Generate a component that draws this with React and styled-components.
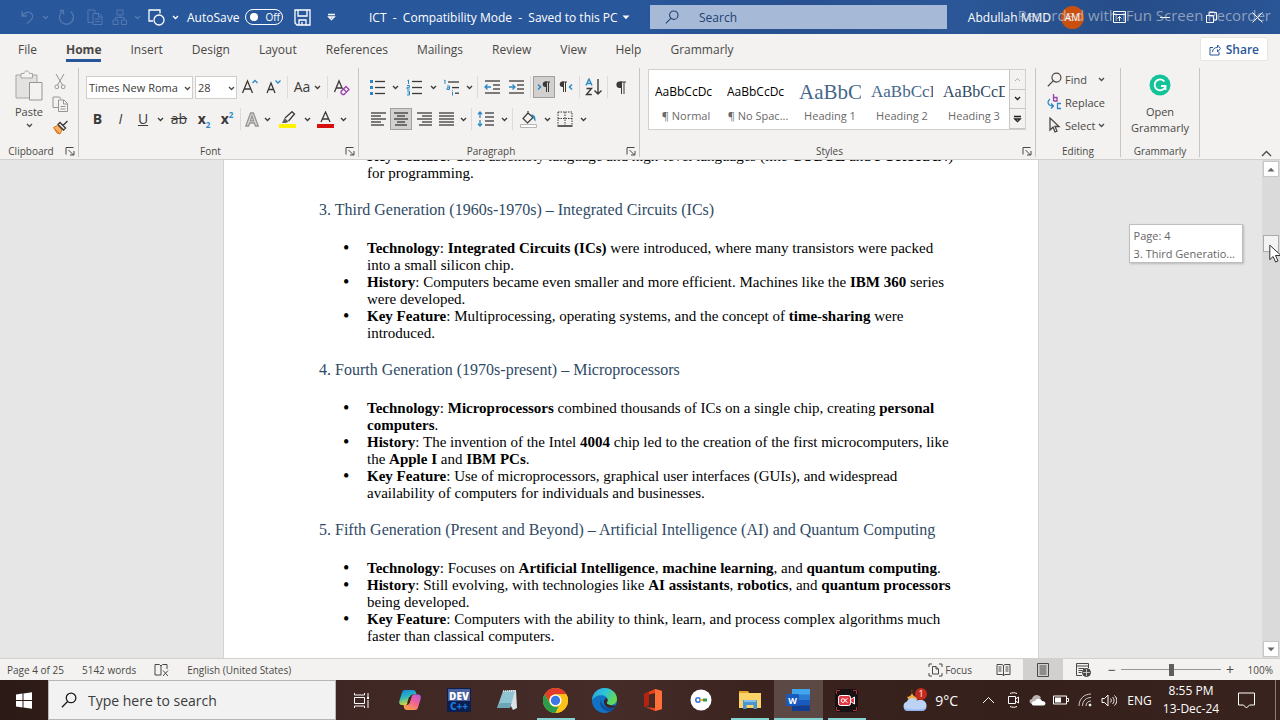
import React, { useState } from "react";
import styled, { createGlobalStyle } from "styled-components";

const Colors = {
  Brand: "#29569a",
  Ribbon: "#f3f2f0",
  Border: "#c8c6c4",
  Text: "#4a4846",
  Ink: "#3b3a39",
  Blue: "#2b88c8",
  Desk: "#e6e6e6",
  Heading: "#2f4a66",
};

const GlobalStyle = createGlobalStyle`
  * { box-sizing: border-box; }
  body { margin: 0; overflow: hidden; font-family: "Open Sans", "Noto Sans", sans-serif; font-size: 12px; color: ${Colors.Text}; }
  button, input, select { font: inherit; color: inherit; }
  button { background: none; border: 0; padding: 0; }
  svg { display: block; flex: none; }
`;

const Shell = styled.div`
  display: flex;
  flex-direction: column;
  height: 100vh;
`;

/* ---------- title bar ---------- */

const TitleBar = styled.header`
  position: relative;
  display: grid;
  grid-template-columns: 369px 281px minmax(180px, 297px) 1fr;
  align-items: center;
  height: 34px;
  color: #fff;
  background: linear-gradient(90deg, #29579b 0 50%, #28508f 62%, #2b5798 75%, #264d88 88%, #2a5596);
`;

const QuickAccess = styled.div`
  display: flex;
  align-items: center;
  padding-left: 17px;
`;

const QuickButton = styled.button`
  display: flex;
  align-items: center;
  justify-content: center;
  width: ${(p) => p.$w || 22}px;
  height: 24px;
  color: ${(p) => (p.$dim ? "#5479b0" : "#fff")};
`;

const AutoSave = styled.label`
  display: flex;
  align-items: center;
  gap: 6px;
  padding: 0 8px 0 6px;
`;

const Toggle = styled.button`
  display: flex;
  align-items: center;
  gap: 7px;
  width: 38px;
  height: 16px;
  padding-left: 4px;
  border: 1px solid #fff;
  border-radius: 8px;
  font-size: 10px;
  line-height: 12px;
`;

const Knob = styled.span`
  width: 8px;
  height: 8px;
  border-radius: 50%;
  background: #fff;
`;

const DocName = styled.button`
  display: flex;
  align-items: center;
  gap: 4px;
  white-space: pre;
`;

const SearchBox = styled.label`
  display: flex;
  align-items: center;
  gap: 20px;
  height: 24px;
  padding-left: 15px;
  background: #a6bad7;
  color: #21406f;
`;

const SearchInput = styled.input`
  flex: 1;
  min-width: 0;
  border: 0;
  padding: 0;
  background: none;
  outline: none;
  &::placeholder { color: #21406f; opacity: 1; }
`;

const WindowSide = styled.div`
  display: flex;
  align-items: center;
  justify-content: flex-end;
`;

const Account = styled.button`
  display: flex;
  align-items: center;
  gap: 10px;
  padding-right: 12px;
  white-space: nowrap;
`;

const Avatar = styled.span`
  width: 23px;
  height: 23px;
  border-radius: 50%;
  background: #ca5010;
  font-size: 10px;
  line-height: 23px;
  text-align: center;
`;

const WindowButton = styled(QuickButton)`
  width: 46px;
`;

const Watermark = styled.div`
  position: absolute;
  top: 4px;
  right: 9px;
  font-size: 15px;
  line-height: 22px;
  color: rgba(214, 214, 220, 0.6);
  white-space: nowrap;
  pointer-events: none;
`;

/* ---------- ribbon ---------- */

const TabRow = styled.nav`
  display: flex;
  align-items: center;
  gap: 29px;
  height: 30px;
  padding: 0 12px 0 18px;
  background: ${Colors.Ribbon};
`;

const Tab = styled.button`
  height: 26px;
  padding-top: 4px;
  line-height: 19px;
  border-bottom: 3px solid ${(p) => (p.$active ? Colors.Brand : "transparent")};
  font-weight: ${(p) => (p.$active ? 700 : 400)};
`;

const Share = styled.button`
  display: flex;
  align-items: center;
  gap: 5px;
  height: 24px;
  margin-left: auto;
  padding: 0 8px;
  border: 1px solid #e8e6e4;
  border-radius: 2px;
  background: #fff;
  color: ${Colors.Brand};
  font-weight: 600;
`;

const RibbonBar = styled.div`
  display: flex;
  height: 96px;
  background: ${Colors.Ribbon};
  border-bottom: 1px solid #d2d0ce;
`;

const GroupBox = styled.section`
  display: flex;
  flex-direction: column;
  width: ${(p) => p.$w}px;
  margin: 4px 0 2px;
  border-right: 1px solid ${Colors.Border};
`;

const GroupBody = styled.div`
  display: flex;
  flex-direction: ${(p) => (p.$row ? "row" : "column")};
  flex: 1;
  gap: ${(p) => p.$gap || 0}px;
  padding: ${(p) => p.$pad || "8px 0 0 7px"};
`;

const GroupFooter = styled.div`
  display: flex;
  align-items: center;
  height: 12px;
  font-size: 10px;
  line-height: 12px;
`;

const GroupName = styled.span`
  flex: 1;
  text-align: center;
`;

const Launcher = styled.button`
  display: flex;
  justify-content: flex-end;
  width: 16px;
  padding-right: 3px;
  color: ${Colors.Text};
`;

const ToolRow = styled.div`
  display: flex;
  align-items: center;
  height: 22px;
`;

const Tool = styled.button`
  display: flex;
  align-items: center;
  justify-content: center;
  gap: 4px;
  width: ${(p) => p.$w || 24}px;
  height: 22px;
  color: ${Colors.Ink};
  background: ${(p) => (p.$on ? "#d2d0ce" : "none")};
  border: ${(p) => (p.$on ? "1px solid #a19f9d" : "0")};
  font-size: 14px;
  font-weight: ${(p) => (p.$bold ? 700 : 400)};
  font-style: ${(p) => (p.$italic ? "italic" : "normal")};
  line-height: 20px;

  sub, sup {
    color: ${Colors.Blue};
    font-size: 8px;
    line-height: 8px;
  }
`;

const Sep = styled.span`
  width: 1px;
  height: 22px;
  margin: 0 2px;
  background: #dddbd9;
`;

const PickerBox = styled.span`
  position: relative;
  width: ${(p) => p.$w}px;
  height: 23px;
  margin-right: ${(p) => p.$after || 0}px;
  background: #fff;
  border: 1px solid #d0cecc;
  overflow: hidden;

  svg { position: absolute; right: 1px; top: 9px; pointer-events: none; }
`;

const PickerSelect = styled.select`
  appearance: none;
  width: 100%;
  height: 21px;
  padding: 0 7px 0 2px;
  border: 0;
  background: none;
  outline: none;
  color: ${Colors.Ink};
  font-size: 11px;
`;

const PasteButton = styled.button`
  display: flex;
  flex-direction: column;
  align-items: center;
  width: 44px;
  font-size: 11px;
  line-height: 16px;
  gap: 3px;
`;

const SmallStack = styled.div`
  display: flex;
  flex-direction: column;
  gap: 1px;
`;

const Gallery = styled.div`
  display: grid;
  grid-template-columns: repeat(5, 72px) 16px;
  height: 61px;
  background: #fff;
  border: 1px solid #d2d0ce;
`;

const StyleCard = styled.button`
  display: grid;
  grid-template-rows: 28px 20px;
  padding: 8px 4px 0 6px;
  overflow: hidden;
  white-space: nowrap;
`;

const Sample = styled.span`
  overflow: hidden;
  text-align: left;
  line-height: 28px;
  font-family: ${(p) => (p.$serif ? '"Liberation Serif", serif' : '"Open Sans", sans-serif')};
  font-size: ${(p) => p.$size}px;
  color: ${(p) => p.$color};
`;

const StyleName = styled.span`
  font-size: 11px;
  line-height: 20px;
  color: #6b6967;
`;

const GalleryScroll = styled.div`
  display: grid;
  grid-template-rows: 1fr 1fr 1fr;
  button {
    display: grid;
    place-items: center;
    background: ${Colors.Ribbon};
    border-left: 1px solid ${Colors.Border};
    border-bottom: 1px solid ${Colors.Border};
    color: #201f1e;
  }
  button:disabled { color: #b0aeac; }
`;

const EditRow = styled.button`
  display: flex;
  align-items: center;
  gap: 3px;
  height: 22px;
  font-size: 11px;

  > svg:last-child { margin-left: ${(p) => p.$caret || 0}px; }
`;

const AddIn = styled.button`
  display: flex;
  flex-direction: column;
  align-items: center;
  font-size: 11px;
  line-height: 16px;
  width: 100%;
  gap: 8px;
`;

const Collapse = styled.button`
  align-self: flex-end;
  margin: 0 8px 2px auto;
`;

/* ---------- document ---------- */

const Workspace = styled.main`
  position: relative;
  display: flex;
  flex: 1;
  min-height: 0;
  background: ${Colors.Desk};
`;

const Canvas = styled.div`
  flex: 1;
  display: flex;
  justify-content: center;
  overflow: hidden;
`;

const Paper = styled.article`
  width: 100%;
  max-width: 816px;
  align-self: flex-start;
  margin-top: -12px;
  padding: 0 83px 60px 95px;
  background: #fff;
  border-left: 1px solid #d4d4d4;
  border-right: 1px solid #d4d4d4;
  color: #000;
  font-family: "Liberation Serif", "Times New Roman", serif;
  font-size: 15px;
  line-height: 17px;

  p { margin: 0 0 0 48px; }
`;

const DocHeading = styled.h3`
  margin: 19px 0 21px;
  font-size: 16px;
  line-height: 18px;
  font-weight: 400;
  color: ${Colors.Heading};
`;

const Bullets = styled.ul`
  margin: 0;
  padding: 0 0 0 48px;
  list-style: none;
`;

const Bullet = styled.li`
  &::before {
    content: "•";
    float: left;
    margin-left: -24px;
    font-size: 18px;
  }
`;

const Scrollbar = styled.div`
  display: flex;
  flex-direction: column;
  align-items: center;
  width: 18px;
  padding: 1px 0;
  background: #dadada;
`;

const ScrollButton = styled.button`
  display: grid;
  place-items: center;
  width: 16px;
  height: 16px;
  background: #fff;
  border: 1px solid #c6c6c6;
  color: #666;
`;

const ScrollTrack = styled.div`
  flex: 1;
  padding-top: 58px;
`;

const Thumb = styled.div`
  width: 16px;
  height: 17px;
  background: #f3f3f3;
  border: 1px solid #ababab;
`;

const PageTip = styled.div`
  position: absolute;
  top: 64px;
  right: 37px;
  padding: 2px 7px 0 4px;
  height: 39px;
  background: #fff;
  border: 1px solid #bebebe;
  box-shadow: 1px 1px 2px rgba(0, 0, 0, 0.2);
  color: #666;
  font-size: 11px;
  line-height: 18px;
`;

const Pointer = styled.svg`
  position: absolute;
  top: 84px;
  right: 0;
`;

/* ---------- status bar ---------- */

const StatusBar = styled.footer`
  display: flex;
  align-items: center;
  height: 22px;
  padding: 0 7px;
  border-top: 1px solid #d2d0ce;
  background: ${Colors.Ribbon};
  font-size: 10px;
`;

const StatusItem = styled.button`
  display: flex;
  align-items: center;
  gap: 2px;
  margin-right: 18px;
`;

const StatusEnd = styled.div`
  display: flex;
  align-items: center;
  margin-left: auto;
`;

const FocusButton = styled(StatusItem)`
  margin-right: 11px;
`;

const ViewButton = styled.button`
  display: grid;
  place-items: center;
  width: 40px;
  height: 21px;
  background: ${(p) => (p.$on ? "#d2d0ce" : "none")};
`;

const ZoomButton = styled.button`
  width: 18px;
  font-size: 14px;
  line-height: 20px;
`;

const ZoomSlider = styled.input`
  appearance: none;
  width: 100px;
  height: 12px;
  margin: 0;
  background: linear-gradient(#979593, #979593) center / 100% 1px no-repeat;
  &::-webkit-slider-thumb {
    appearance: none;
    width: 5px;
    height: 12px;
    background: #605e5c;
  }
`;

const ZoomValue = styled.span`
  width: 34px;
  text-align: right;
`;

/* ---------- taskbar ---------- */

const Taskbar = styled.footer`
  display: flex;
  height: 40px;
  color: #fff;
  background: linear-gradient(90deg, #2c1a17, #402825 30%, #452c29 48%, #3a231f 60%, #35201c 80%, #38231f);
`;

const StartButton = styled.button`
  display: grid;
  place-items: center;
  width: 48px;
`;

const TaskSearch = styled.label`
  display: flex;
  align-items: center;
  gap: 11px;
  flex: 0 1 288px;
  padding-left: 12px;
  border: 1px solid #bab6b5;
  background: #f2f2f2;
  color: #1b1b1b;
  font-size: 14px;
`;

const TaskInput = styled(SearchInput)`
  &::placeholder { color: #3b3b3b; }
`;

const Apps = styled.div`
  display: grid;
  grid-template-columns: 50px repeat(10, 1fr);
  flex: 0 1 535px;
`;

const AppButton = styled.button`
  display: grid;
  place-items: center;
  background: ${(p) => (p.$active ? "#5c4845" : "none")};
  box-shadow: ${(p) => (p.$open ? "inset 0 -2px #84d2d2" : "none")};
  margin: ${(p) => (p.$open && !p.$active ? "0 5px" : "0")};
`;

const Tray = styled.div`
  display: flex;
  align-items: center;
  margin-left: auto;
`;

const TrayButton = styled.button`
  display: grid;
  place-items: center;
  width: ${(p) => p.$w || 24}px;
  height: 40px;
`;

const Weather = styled.button`
  display: flex;
  align-items: center;
  gap: 7px;
  margin-right: 18px;
  font-size: 14px;
`;

const Clock = styled.div`
  width: 66px;
  text-align: center;
  font-size: 12px;
  line-height: 18px;
`;

const DesktopEdge = styled.button`
  width: 5px;
  height: 40px;
  margin-left: 7px;
  border-left: 1px solid #8b7f7d;
`;

/* ---------- icons ---------- */

function Icon({ w = 16, h = w, sw = 1, children, ...rest }) {
  return (
    <svg width={w} height={h} viewBox={`0 0 ${w} ${h}`} fill="none" stroke="currentColor" strokeWidth={sw} aria-hidden="true" {...rest}>
      {children}
    </svg>
  );
}

const Caret = () => <Icon w={7} h={5} sw={1.3}><path d="M1 1l2.500 2.500L6 1" /></Icon>;
const Triangle = ({ up }) => <Icon w={8} h={5}><path d={up ? "M0.5 4.5h7L4 .8z" : "M0.5 .5h7L4 4.2z"} fill="currentColor" stroke="none" /></Icon>;
const More = () => <Icon w={9} h={8} sw={1.3}><path d="M1 1.5h7M1.8 4L4.5 6.6 7.2 4z" /></Icon>;
const Magnifier = ({ size = 14 }) => (
  <svg width={size} height={size} viewBox="0 0 14 14" fill="none" stroke="currentColor" strokeWidth="1.1" aria-hidden="true">
    <circle cx="8.8" cy="5.2" r="4.2" /><path d="M5.8 8.3L.8 13.3" />
  </svg>
);
const LaunchIcon = () => <Icon w={10}><path d="M1 8.5V1.5h7.5M3.500 4l5 5M9 5v4H5" /></Icon>;

// rows of lines, each one given as [x1, x2]
const Lines = ({ rows, y = 2, step = 4 }) => rows.map(([a, b], i) => <path key={i} strokeWidth="1.3" d={`M${a} ${y + i * step}H${b}`} />);

const ListIcon = ({ kind }) => (
  <Icon w={17} h={17}>
    {kind === "bullet" && <path fill={Colors.Blue} stroke="none" d="M1 1h3v3H1zM1 7h3v3H1zM1 13h3v3H1z" />}
    {kind === "number" && <path stroke={Colors.Blue} d="M1.500 1.500l1-.5v4M1 6.500h2.500v1.800H1v1.700h2.700M1 12h2.500v4H1M1.500 14h2" />}
    {kind === "multi" && <path stroke={Colors.Blue} d="M1 1.500l1-.5v4M4 7h2.500v3.500H4V8.800h2.500M9.500 13v3.500M9.500 11.200v1" />}
    {kind === "multi" ? <Lines rows={[[5, 16], [9, 16], [12, 16]]} y={3} step={5.6} /> : <Lines rows={[[6, 16], [6, 16], [6, 16]]} y={2.5} step={6} />}
  </Icon>
);
const IndentIcon = ({ out }) => (
  <Icon w={16}>
    <Lines rows={[[1, 16], [9, 16], [9, 16], [1, 16]]} y={2} />
    <path stroke={Colors.Blue} strokeWidth="1.3" d={out ? "M7 8H1M3.500 5.500L1 8l2.500 2.500" : "M1 8h6M4.500 5.500L7 8l-2.500 2.500"} />
  </Icon>
);
const AlignIcon = ({ rows }) => <Icon w={16}><Lines rows={rows} y={2} step={3} /></Icon>;

function SpacingIcon() {
  return (
    <Icon w={18} h={16}>
      <path stroke={Colors.Blue} strokeWidth="1.3" d="M3 1v6M1 3.200L3 1l2 2.200M3 9v6M1 12.800L3 15l2-2.200" />
      <Lines rows={[[8, 17], [8, 17], [8, 17], [8, 17]]} y={2} />
    </Icon>
  );
}

function AppIcons({ name }) {
  switch (name) {
    case "copilot":
      return (
        <svg width="24" height="24" viewBox="0 0 24 24">
          <defs>
            <linearGradient id="cpA" x1="0" y1="0" x2="0.3" y2="1"><stop stopColor="#1b7fe0" /><stop offset=".5" stopColor="#25b6c0" /><stop offset="1" stopColor="#d8d936" /></linearGradient>
            <linearGradient id="cpB" x1="1" y1="0" x2=".4" y2="1"><stop stopColor="#b45be0" /><stop offset=".5" stopColor="#f0609a" /><stop offset="1" stopColor="#f79a4d" /></linearGradient>
          </defs>
          <path fill="url(#cpA)" d="M7 2h8c2 0 2.600 1.200 3 2.500l.6 2H15c-2 0-2.700 1-3.200 2.600L9.800 15c-.5 1.400-1.500 2-3 2H4c-2.500 0-3.200-1.800-2.600-4L4 4.500C4.500 2.800 5.500 2 7 2z" />
          <path fill="url(#cpB)" d="M17 22H9c-2 0-2.600-1.200-3-2.500L5.500 17H8c2 0 3-1 3.500-2.600L13.500 9c.5-1.600 1.500-2.500 3-2.500H20c2.500 0 3.200 2.300 2.600 4.500L20 19.500c-.5 1.700-1.500 2.500-3 2.500z" />
          <path fill="#3a2422" d="M11 9h2.500l-2 6.500H9z" />
        </svg>
      );
    case "dev":
      return (
        <svg width="24" height="24" viewBox="0 0 24 24" fontFamily="Open Sans" fontWeight="800">
          <rect width="24" height="24" rx="1" fill="#0c1e4e" /><rect x="1" y="1" width="22" height="12" fill="#4a61a0" />
          <text x="12" y="12" fontSize="10" textAnchor="middle" fill="#fff">DEV</text>
          <text x="12" y="22" fontSize="10" textAnchor="middle" fill="#1877d8">C++</text>
        </svg>
      );
    case "notepad":
      return (
        <svg width="24" height="24" viewBox="0 0 24 24">
          <path fill="#d9e2e4" d="M8 3l13-1 1 18-4 2z" /><path fill="#8fc4d2" d="M8 3h12l-5 17H2z" />
          <path fill="#5e98a8" d="M2 20h13l1.500-5H5z" opacity=".7" /><path d="M8 3h12" stroke="#e8eef0" strokeWidth="1.500" strokeDasharray="1 1" />
        </svg>
      );
    case "chrome":
      return (
        <svg width="25" height="25" viewBox="0 0 24 24">
          <circle cx="12" cy="12" r="12" fill="#fbc116" />
          <path fill="#e33b2e" d="M1.600 6A12 12 0 0 1 22.400 6H12a6 6 0 0 0-5.200 9z" />
          <path fill="#2a9d4b" d="M1.600 6l5.200 9A6 6 0 0 0 12 18c1 0 2-.2 3-.8L12 24A12 12 0 0 1 1.600 6z" />
          <path fill="#fbc116" d="M12 6h10.400A12 12 0 0 1 12 24l5.200-9A6 6 0 0 0 12 6z" />
          <circle cx="12" cy="12" r="5.800" fill="#fff" /><circle cx="12" cy="12" r="4.500" fill="#3b78e7" />
        </svg>
      );
    case "edge":
      return (
        <svg width="25" height="25" viewBox="0 0 24 24">
          <defs><linearGradient id="edA" x1="0" y1="0" x2="1" y2=".4"><stop stopColor="#2aa3dd" /><stop offset=".55" stopColor="#2fc3d8" /><stop offset="1" stopColor="#63d957" /></linearGradient></defs>
          <circle cx="12" cy="12" r="12" fill="#1273c4" />
          <path fill="url(#edA)" d="M0 12C.3 5 5.500 0 12 0s12 4.800 12 10.500c0 3.500-2.800 5.800-6 5.800-2.500 0-4-.9-4-1.800 0-.7 1-1.100 1-2.900 0-2.600-2.600-4.600-6-4.600-4 0-7.500 2-9 5z" />
          <path fill="#0f4f9c" d="M8.500 11c-2.500 6 2 11.500 9 11.500 2-.8 4-2.600 5-4.500-2 1-4 1.300-6 1-5-.5-8-4-8-8z" />
          <path fill="#3a2422" d="M14 14.500c0-.7 1-1.100 1-2.900 0-.8-.4-1.600-1-2.300-2 1-3 3.200-2.300 5.700 1.200 3 5 4.800 9 3.800 1.300-.5 2.300-1.200 3-2.300-1.500 1-8.500.5-9.700-2z" />
        </svg>
      );
    case "office":
      return (
        <svg width="20" height="24" viewBox="0 0 20 24">
          <path fill="#e8421f" d="M1 6l11-5 7 2v18l-7 2-10-4 10 1V5L6 6.500V17l-5 2z" /><path fill="#b5230f" d="M1 6l5-2.500V17l-5 2z" /><path fill="#ff6f38" d="M12 1l7 2v18l-7 2z" />
        </svg>
      );
    case "key":
      return (
        <svg width="22" height="22" viewBox="0 0 22 22">
          <circle cx="11" cy="11" r="10.500" fill="#fff" /><circle cx="8" cy="11" r="2.200" fill="none" stroke="#3674d9" strokeWidth="1.600" />
          <path d="M10 11h4" stroke="#f0b51b" strokeWidth="2" /><path d="M13 11h4" stroke="#2f9950" strokeWidth="3" />
        </svg>
      );
    case "files":
      return (
        <svg width="22" height="20" viewBox="0 0 22 20">
          <path fill="#e6a623" d="M0 1h9l2 3H0z" /><path fill="#fbd368" d="M0 3h22v15H0z" /><path fill="#4796d2" d="M4 10h14v9h-3.500v-4h-7v4H4z" /><path fill="#83bfe8" d="M5 10h12v2H5z" />
        </svg>
      );
    case "word":
      return (
        <svg width="24" height="22" viewBox="0 0 24 22" fontFamily="Open Sans" fontWeight="700">
          <path fill="#41a5ee" d="M6 0h18v6H6z" /><path fill="#2b7cd3" d="M6 5.500h18V11H6z" /><path fill="#185abd" d="M6 11h18v5.500H6z" /><path fill="#103f91" d="M6 16.500h18V22H6z" />
          <rect y="5" width="13" height="12" rx="1" fill="#185abd" /><text x="6.500" y="14.500" fontSize="9" textAnchor="middle" fill="#fff">W</text>
        </svg>
      );
    default:
      return (
        <svg width="23" height="23" viewBox="0 0 23 23">
          <rect width="23" height="23" rx="4" fill="#171114" />
          <path d="M1.500 5V1.500H5M18 1.500h3.500V5M21.500 18v3.500H18M5 21.500H1.500V18" stroke="#b92c35" fill="none" />
          <rect x="3.500" y="6.500" width="12" height="10" rx="2" fill="#e23a45" stroke="#fff" /><path d="M15.500 10.500l4-2.500v7l-4-2.500z" fill="#e23a45" stroke="#fff" />
          <circle cx="8" cy="11.500" r="1.800" fill="none" stroke="#fff" /><path d="M9.500 11.500l3-2M10 11.500l2.500 2" stroke="#fff" />
        </svg>
      );
  }
}

/* ---------- pieces ---------- */

const tabs = ["File", "Home", "Insert", "Design", "Layout", "References", "Mailings", "Review", "View", "Help", "Grammarly"];

const styleCards = [
  { sample: "AaBbCcDc", name: "¶ Normal", size: 12, color: "#000" },
  { sample: "AaBbCcDc", name: "¶ No Spac...", size: 12, color: "#000" },
  { sample: "AaBbC", name: "Heading 1", size: 21, color: "#44678c", serif: true },
  { sample: "AaBbCcI", name: "Heading 2", size: 17, color: "#44678c", serif: true },
  { sample: "AaBbCcD", name: "Heading 3", size: 16, color: "#2f4a66", serif: true },
];

const apps = [
  { id: "copilot", label: "Copilot" },
  { id: "dev", label: "Dev-C++" },
  { id: "notepad", label: "Notepad" },
  { id: "chrome", label: "Chrome", open: true },
  { id: "edge", label: "Edge" },
  { id: "office", label: "Office" },
  { id: "key", label: "Passwords" },
  { id: "files", label: "File Explorer", open: true },
  { id: "word", label: "Word", open: true, active: true },
  { id: "recorder", label: "Recorder", open: true },
];

function Group({ name, w, launcher, children }) {
  return (
    <GroupBox $w={w}>
      {children}
      <GroupFooter>
        <GroupName>{name}</GroupName>
        {launcher && <Launcher aria-label={`${name} settings`}><LaunchIcon /></Launcher>}
      </GroupFooter>
    </GroupBox>
  );
}

const CaretTool = ({ of }) => <Tool $w={12} aria-label={`${of} options`}><Caret /></Tool>;

function Header() {
  const [saving, setSaving] = useState(false);
  return (
    <TitleBar>
      <QuickAccess>
        <QuickButton $dim aria-label="Undo"><Icon w={16}><path strokeWidth="1.300" d="M2 2v5h5M2 7c3-4 7-5 9.500-2.500S13 10 7 14.500" /></Icon></QuickButton>
        <QuickButton $w={12} $dim aria-label="Undo history"><Caret /></QuickButton>
        <QuickButton $w={30} $dim aria-label="Redo"><Icon w={16}><path strokeWidth="1.300" d="M12.500 2.500A7 7 0 1 1 4.500 2.500M1.500 1.500h4v4" /></Icon></QuickButton>
        <QuickButton $w={28} $dim aria-label="Copy"><Icon w={16}><path d="M6 13.500H1V1h7v3M6 4.500h6l3 3v8H6zM11.500 4.500V8H15M8 10h5M8 12.500h5" /></Icon></QuickButton>
        <QuickButton $w={22} $dim aria-label="Arrange"><Icon w={16}><path d="M5 1h6v5H5zM1 11h5v4.500H1zM9.500 11h5v4.500h-5zM8 6v2.500M3.500 11V8.500H12V11" /></Icon></QuickButton>
        <QuickButton $w={12} $dim aria-label="Arrange options"><Caret /></QuickButton>
        <QuickButton $w={26} aria-label="Shapes"><Icon w={17}><path strokeWidth="1.300" d="M5 12H1V1h11v3.500" /><circle cx="11" cy="11" r="5" strokeWidth="1.300" /></Icon></QuickButton>
        <QuickButton $w={12} aria-label="Shape options"><Caret /></QuickButton>
        <AutoSave>
          AutoSave
          <Toggle role="switch" aria-checked={saving} onClick={() => setSaving(!saving)}><Knob />{saving ? "On" : "Off"}</Toggle>
        </AutoSave>
        <QuickButton $w={22} aria-label="Save"><Icon w={17}><path strokeWidth="1.300" d="M1 1h15v15H3l-2-2zM4 1v6h9V1M5 16v-5h7v5M8 13v3" /></Icon></QuickButton>
        <QuickButton $w={36} aria-label="Customize toolbar"><More /></QuickButton>
      </QuickAccess>
      <DocName>{"ICT  -  Compatibility Mode  -  Saved to this PC"}<Triangle /></DocName>
      <SearchBox>
        <Magnifier />
        <SearchInput placeholder="Search" aria-label="Search" />
      </SearchBox>
      <WindowSide>
        <Account>Abdullah MMD<Avatar>AM</Avatar></Account>
        <WindowButton aria-label="Ribbon display"><Icon w={13} h={12}><path d="M.5 .5h12v11H.5zM.5 3.500h12M6.500 10V5.500M4.500 7.500l2-2 2 2" /></Icon></WindowButton>
        <WindowButton aria-label="Minimize"><Icon w={10}><path d="M0 5.500h10" /></Icon></WindowButton>
        <WindowButton aria-label="Restore"><Icon w={11}><path d="M.5 3.500h7v7h-7zM3 3.500V.5h7.500V8h-3" /></Icon></WindowButton>
        <WindowButton aria-label="Close"><Icon w={11}><path d="M.5 .5l10 10M10.500 .5l-10 10" /></Icon></WindowButton>
      </WindowSide>
      <Watermark>Recorded with iFun Screen Recorder</Watermark>
    </TitleBar>
  );
}

function FontGroup() {
  return (
    <Group name="Font" w={280} launcher>
      <GroupBody $gap={10}>
        <ToolRow>
          <PickerBox $w={107} $after={2}>
            <PickerSelect aria-label="Font"><option>Times New Roma</option></PickerSelect><Caret />
          </PickerBox>
          <PickerBox $w={42}>
            <PickerSelect aria-label="Font size"><option>28</option></PickerSelect><Caret />
          </PickerBox>
          <Tool aria-label="Grow font"><Icon w={17} h={16}><path strokeWidth="1.300" d="M1.500 14L6.500 2l5 12M3.300 10h6.400" /><path stroke={Colors.Blue} strokeWidth="1.300" d="M11.500 4L14 1.500 16.500 4" /></Icon></Tool>
          <Tool aria-label="Shrink font"><Icon w={16} h={16}><path strokeWidth="1.300" d="M2 14L6 4l4 10M3.500 10.500h5" /><path stroke={Colors.Blue} strokeWidth="1.300" d="M10.500 1.500L13 4l2.500-2.500" /></Icon></Tool>
          <Sep />
          <Tool $w={35} aria-label="Change case">Aa<Caret /></Tool>
          <Sep />
          <Tool $w={22} aria-label="Clear formatting"><Icon w={17} h={17}><path strokeWidth="1.300" d="M1.500 13L6 2l3.500 8M3.300 9h5" /><path stroke="#9a3fb0" strokeWidth="1.300" d="M8 12.500l5-5 3 3-5 5H9.500L8 14zM10.500 10l3 3" /></Icon></Tool>
        </ToolRow>
        <ToolRow>
          <Tool $w={23} $bold>B</Tool>
          <Tool $w={23} $italic>I</Tool>
          <Tool $w={22}><u>U</u></Tool>
          <CaretTool of="Underline" />
          <Tool $w={26}><s>ab</s></Tool>
          <Tool $w={24} $bold><span>x<sub>2</sub></span></Tool>
          <Tool $w={22} $bold><span>x<sup>2</sup></span></Tool>
          <Sep />
          <Tool $w={18} aria-label="Text effects"><Icon w={14} h={15}><path stroke="#979593" strokeWidth="1.300" fill="#dddbd9" d="M.8 14L5.600 1h2.800l4.800 13h-2.800l-1-3H4.600l-1 3zM5.400 8.800h3.200L7 4z" /></Icon></Tool>
          <CaretTool of="Text effects" />
          <Tool $w={28} aria-label="Highlight"><Icon w={17} h={17}><path fill="#fff200" stroke="none" d="M0 13h17v4H0z" /><path fill="#605e5c" stroke="none" d="M3 12l2.500-5 4 3.500L7 12z" /><path strokeWidth="1.300" d="M6 7l7-6.300L15.500 3 9.500 10" /></Icon></Tool>
          <CaretTool of="Highlight" />
          <Tool $w={24} aria-label="Font colour"><Icon w={17} h={17}><path fill="#d80f0f" stroke="none" d="M0 13h17v4H0z" /><path strokeWidth="1.300" d="M4 11l4.500-10L13 11M5.500 8h6" /></Icon></Tool>
          <CaretTool of="Font colour" />
        </ToolRow>
      </GroupBody>
    </Group>
  );
}

function ParagraphGroup() {
  return (
    <Group name="Paragraph" w={281} launcher>
      <GroupBody $gap={10} $pad="8px 0 0 6px">
        <ToolRow>
          <Tool aria-label="Bullets"><ListIcon kind="bullet" /></Tool>
          <CaretTool of="Bullets" />
          <Tool $w={26} aria-label="Numbering"><ListIcon kind="number" /></Tool>
          <CaretTool of="Numbering" />
          <Tool aria-label="Multilevel list"><ListIcon kind="multi" /></Tool>
          <CaretTool of="Multilevel" />
          <Sep />
          <Tool aria-label="Decrease indent"><IndentIcon out /></Tool>
          <Tool aria-label="Increase indent"><IndentIcon /></Tool>
          <Sep />
          <Tool $w={22} $on aria-label="Left to right"><Icon w={14} h={14}><path stroke={Colors.Blue} strokeWidth="1.500" d="M1 4.500L3.500 7 1 9.500" /><path d="M9.500 2v10M11.500 2v10M8 2h5" /><path fill="currentColor" stroke="none" d="M10 1.500H8.500a2.700 2.700 0 0 0 0 5.500H10z" /></Icon></Tool>
          <Tool $w={22} aria-label="Right to left"><Icon w={14} h={14}><path stroke={Colors.Blue} strokeWidth="1.500" d="M13 4.500L10.500 7l2.500 2.500" /><path d="M4.500 2v10M6.500 2v10M3 2h5" /><path fill="currentColor" stroke="none" d="M5 1.500H3.500a2.700 2.700 0 0 0 0 5.500H5z" /></Icon></Tool>
          <Sep />
          <Tool $w={23} aria-label="Sort"><Icon w={17} h={18}><path stroke={Colors.Blue} strokeWidth="1.400" d="M1 7.500L4 1l3 6.500M2 5.500h4" /><path strokeWidth="1.400" d="M1.500 10.500h5l-5 6h5.300M13 1v15M9.500 12.500L13 16l3.500-3.500" /></Icon></Tool>
          <Sep />
          <Tool $w={22} aria-label="Show marks"><Icon w={10} h={13}><path d="M5.500 1v12M8 1v12M4 1h6" /><path fill="currentColor" stroke="none" d="M6 .5H3.700a3.300 3.300 0 0 0 0 6.600H6z" /></Icon></Tool>
        </ToolRow>
        <ToolRow>
          <Tool $w={25} aria-label="Align left"><AlignIcon rows={[[1, 16], [1, 11], [1, 16], [1, 11], [1, 14]]} /></Tool>
          <Tool $w={22} $on aria-label="Center"><AlignIcon rows={[[1, 15], [4, 12], [1, 15], [4, 12], [2, 14]]} /></Tool>
          <Tool $w={23} aria-label="Align right"><AlignIcon rows={[[1, 16], [6, 16], [1, 16], [6, 16], [3, 16]]} /></Tool>
          <Tool $w={22} aria-label="Justify"><AlignIcon rows={[[1, 16], [1, 16], [1, 16], [1, 16], [1, 16]]} /></Tool>
          <CaretTool of="Justify" />
          <Sep />
          <Tool aria-label="Line spacing"><SpacingIcon /></Tool>
          <CaretTool of="Line spacing" />
          <Sep />
          <Tool $w={26} aria-label="Shading"><Icon w={17} h={17}><path fill="#fff" stroke="#b8b6b4" d="M.5 13.500h16v3H.5z" /><path strokeWidth="1.200" d="M8 2L3 7.500 7.500 12l5.500-5.500L8 2V0" /><path fill={Colors.Blue} stroke="none" d="M11 3.500c3-.5 5 2 4.500 7-1-.5-1.500-2.500-2.500-4z" /></Icon></Tool>
          <CaretTool of="Shading" />
          <Tool aria-label="Borders"><Icon w={16}><path strokeDasharray="1.500 1" d="M1 1h14v13M1 1v13M8 1v13M1 7.500h14" /><path strokeWidth="1.600" d="M.5 15h15" /></Icon></Tool>
          <CaretTool of="Borders" />
        </ToolRow>
      </GroupBody>
    </Group>
  );
}

function Ribbon() {
  return (
    <RibbonBar>
      <Group name="Clipboard" w={79} launcher>
        <GroupBody $row $pad="2px 0 0 7px">
          <PasteButton>
            <Icon w={28} h={31}><path stroke="#a8a6a4" fill="#e4e2e0" d="M1 5h21v23H1z" /><path stroke="#a8a6a4" fill="#f3f2f0" d="M6 3.500h3c.5-3.500 5-3.500 5.500 0H17.500V8H6z" /><path stroke="#979593" fill="#f3f2f0" d="M14.500 12.500h12.500V30H14.500z" /></Icon>
            Paste
            <Caret />
          </PasteButton>
          <SmallStack>
            <Tool $w={18} aria-label="Cut"><Icon w={12} h={17}><path stroke="#979593" d="M2 1l6.500 11M10 1L3.500 12" /><circle cx="2.800" cy="13.800" r="1.900" stroke="#979593" /><circle cx="9.200" cy="13.800" r="1.900" stroke="#979593" /></Icon></Tool>
            <Tool $w={18} aria-label="Copy"><Icon w={16}><path stroke="#979593" d="M6 11.500H1V1h6.500l1.500 2M6.500 4h5.500l3.500 3.500V15.500h-9zM11.500 4v4h4M8.500 10.500h5M8.500 13h5" /></Icon></Tool>
            <Tool $w={18} aria-label="Format painter"><Icon w={17} h={16}><path fill="#f6b26a" stroke="#e0731a" d="M1.500 8.500l4-2 4.500 4.500-2 4-3-1z" /><path stroke="#e0731a" d="M3 10l4 4" /><path d="M6 5.500l5.500 5.500L13.500 9 8 3.500zM11 6.500L15.500 2" strokeWidth="1.400" /></Icon></Tool>
          </SmallStack>
        </GroupBody>
      </Group>
      <FontGroup />
      <ParagraphGroup />
      <Group name="Styles" w={396} launcher>
        <GroupBody $pad="1px 9px 0 8px">
          <Gallery>
            {styleCards.map((s) => (
              <StyleCard key={s.name}>
                <Sample $size={s.size} $color={s.color} $serif={s.serif}>{s.sample}</Sample>
                <StyleName>{s.name}</StyleName>
              </StyleCard>
            ))}
            <GalleryScroll>
              <button disabled aria-label="Previous styles"><Icon w={7} h={5}><path d="M1 4l2.500-2.500L6 4" /></Icon></button>
              <button aria-label="Next styles"><Caret /></button>
              <button aria-label="All styles"><More /></button>
            </GalleryScroll>
          </Gallery>
        </GroupBody>
      </Group>
      <Group name="Editing" w={85}>
        <GroupBody $gap={1} $pad="0 0 0 11px">
          <EditRow $caret={8}><Magnifier size={15} />Find<Caret /></EditRow>
          <EditRow><Icon w={15} h={16}><path stroke="#9a3fb0" strokeWidth="1.300" d="M6.500 0v7M6.500 3.500h3.500V7H6.500" /><path stroke={Colors.Blue} strokeWidth="1.300" d="M14 9.500h-3.500v5H14M3 5C-.5 8 1 12 6 12M4 9.500L6.500 12 4 14.500" /></Icon>Replace</EditRow>
          <EditRow><Icon w={15} h={16}><path strokeWidth="1.300" d="M3 1v12l3-2.800L8 15l2-.9-2-4.600h4z" /></Icon>Select<Caret /></EditRow>
        </GroupBody>
      </Group>
      <Group name="Grammarly" w={79}>
        <GroupBody $pad="6px 0 0">
          <AddIn>
            <svg width="22" height="22" viewBox="0 0 22 22" aria-hidden="true"><circle cx="11" cy="11" r="10.500" fill="#15c39a" /><path fill="none" stroke="#fff" strokeWidth="1.800" d="M15.500 7.500A5.500 5.500 0 1 0 16.500 12M12 12h4.500v4" /></svg>
            <span>Open<br />Grammarly</span>
          </AddIn>
        </GroupBody>
      </Group>
      <Collapse aria-label="Collapse ribbon"><Icon w={11} h={7} sw={1.3}><path d="M1 6l4.500-4.500L10 6" /></Icon></Collapse>
    </RibbonBar>
  );
}

function DocumentView() {
  return (
    <Workspace>
      <Canvas>
        <Paper>
          <p><b>Key Feature</b>: Used assembly language and high-level languages (like <b>COBOL</b> and <b>FORTRAN</b>) for programming.</p>
          <DocHeading>3. Third Generation (1960s-1970s) – Integrated Circuits (ICs)</DocHeading>
          <Bullets>
            <Bullet><b>Technology</b>: <b>Integrated Circuits (ICs)</b> were introduced, where many transistors were packed into a small silicon chip.</Bullet>
            <Bullet><b>History</b>: Computers became even smaller and more efficient. Machines like the <b>IBM 360</b> series were developed.</Bullet>
            <Bullet><b>Key Feature</b>: Multiprocessing, operating systems, and the concept of <b>time-sharing</b> were introduced.</Bullet>
          </Bullets>
          <DocHeading>4. Fourth Generation (1970s-present) – Microprocessors</DocHeading>
          <Bullets>
            <Bullet><b>Technology</b>: <b>Microprocessors</b> combined thousands of ICs on a single chip, creating <b>personal computers</b>.</Bullet>
            <Bullet><b>History</b>: The invention of the Intel <b>4004</b> chip led to the creation of the first microcomputers, like the <b>Apple I</b> and <b>IBM PCs</b>.</Bullet>
            <Bullet><b>Key Feature</b>: Use of microprocessors, graphical user interfaces (GUIs), and widespread availability of computers for individuals and businesses.</Bullet>
          </Bullets>
          <DocHeading>5. Fifth Generation (Present and Beyond) – Artificial Intelligence (AI) and Quantum Computing</DocHeading>
          <Bullets>
            <Bullet><b>Technology</b>: Focuses on <b>Artificial Intelligence</b>, <b>machine learning</b>, and <b>quantum computing</b>.</Bullet>
            <Bullet><b>History</b>: Still evolving, with technologies like <b>AI assistants</b>, <b>robotics</b>, and <b>quantum processors</b> being developed.</Bullet>
            <Bullet><b>Key Feature</b>: Computers with the ability to think, learn, and process complex algorithms much faster than classical computers.</Bullet>
          </Bullets>
        </Paper>
      </Canvas>
      <Scrollbar>
        <ScrollButton aria-label="Scroll up"><Triangle up /></ScrollButton>
        <ScrollTrack><Thumb /></ScrollTrack>
        <ScrollButton aria-label="Scroll down"><Triangle /></ScrollButton>
      </Scrollbar>
      <PageTip>Page: 4<br />3. Third Generatio...</PageTip>
      <Pointer width="11" height="19" viewBox="0 0 11 19" aria-hidden="true"><path fill="#fff" stroke="#333" d="M.8 1.200v14.500l3.300-3.200 2.500 5.500 2.400-1-2.500-5.500H12z" /></Pointer>
    </Workspace>
  );
}

function Status() {
  return (
    <StatusBar>
      <StatusItem>Page 4 of 25</StatusItem>
      <StatusItem>5142 words</StatusItem>
      <StatusItem aria-label="Proofing"><Icon w={15} h={14}><path d="M7 12H1V1.500h4.500L7 3l1.500-1.500H13V6M7 3v9M9 7.500l5 5.500M14 7.500L9 13" /></Icon></StatusItem>
      <StatusItem>English (United States)</StatusItem>
      <StatusEnd>
        <FocusButton><Icon w={15} h={14}><path d="M1 4V1h3M11 1h3v3M14 10v3h-3M4 13H1v-3M4.500 3.500H8l2.500 2.500v5h-6zM8 3.500V6h2.500" /></Icon>Focus</FocusButton>
        <ViewButton aria-label="Read mode"><Icon w={15} h={13}><path d="M7.500 2.500v10M1 1.500h5l1.500 1 1.500-1h5v10H9l-1.500 1-1.500-1H1zM2.500 4h3M2.500 6h3M2.500 8h3M9.500 4h3M9.500 6h3M9.500 8h3" /></Icon></ViewButton>
        <ViewButton $on aria-label="Print layout"><Icon w={12} h={14}><path d="M.5 .5h11v13H.5zM2.500 3h7M2.500 5h7M2.500 7h7M2.500 9h7M2.500 11h7" /></Icon></ViewButton>
        <ViewButton aria-label="Web layout"><Icon w={15} h={14}><path d="M6 12.500H.5V.5h12V5M.5 3h12M2.500 5.500h6M2.500 7.500h4M2.500 9.500h3" /><circle cx="10.500" cy="9.500" r="4" fill="#4a4846" /><path stroke="#f3f2f0" d="M7 9.500h7M10.500 6v7" strokeWidth=".7" /></Icon></ViewButton>
        <ZoomButton aria-label="Zoom out">−</ZoomButton>
        <ZoomSlider type="range" min="0" max="100" defaultValue="50" aria-label="Zoom" />
        <ZoomButton aria-label="Zoom in">+</ZoomButton>
        <ZoomValue>100%</ZoomValue>
      </StatusEnd>
    </StatusBar>
  );
}

function SystemBar() {
  return (
    <Taskbar>
      <StartButton aria-label="Start"><svg width="16" height="17" viewBox="0 0 16 17" fill="#fff"><path d="M0 2.500l6.500-.9V8H0zM7.500 1.400L16 .2V8H7.500zM0 9h6.500v6.400L0 14.500zM7.500 9H16v7.800l-8.500-1.200z" /></svg></StartButton>
      <TaskSearch>
        <Magnifier size={16} />
        <TaskInput placeholder="Type here to search" aria-label="Type here to search" />
      </TaskSearch>
      <Apps>
        <AppButton aria-label="Task view"><Icon w={17} h={17}><path d="M1.500 1v2h10V1M1.500 5.500h10v6h-10zM1.500 16v-2h10v2M15 1v3M15 8v8" /><path strokeWidth="2" d="M15 4.500v2.500" /></Icon></AppButton>
        {apps.map((a) => (
          <AppButton key={a.id} $open={a.open} $active={a.active} aria-label={a.label}><AppIcons name={a.id} /></AppButton>
        ))}
      </Apps>
      <Tray>
        <Weather>
          <svg width="26" height="26" viewBox="0 0 26 26" aria-hidden="true">
            <path fill="#f3ab3c" d="M10 2c-1 4 1 8 7 9-3 4-10 4-12-1 3 0 6-3 5-8z" />
            <path fill="#bcd3f5" d="M5 24a5 5 0 0 1 0-9.500c1-4 8-5 10-1 5-2 10 1 9.500 5.500 0 3-2 5-5 5z" /><path fill="#8fb4ee" d="M2 21c5 2 17 2 22 0-1 2-2.500 3-4.500 3H5c-1.500 0-2.500-1-3-3z" />
            <circle cx="19" cy="7" r="6" fill="#c42b1c" /><text x="19" y="10" fontSize="9" fontFamily="Open Sans" textAnchor="middle" fill="#fff">1</text>
          </svg>
          9°C
        </Weather>
        <TrayButton $w={25} aria-label="Hidden icons"><Icon w={13} h={8}><path d="M1 7l5.500-5.500L12 7" /></Icon></TrayButton>
        <TrayButton aria-label="Meet now"><Icon w={13} h={16}><path d="M1.500 4.500h7v7h-7zM8.500 7l3-2v6l-3-2M3 1.500c2-1 5-1 7 0M3 14.500c2 1 5 1 7 0" /></Icon></TrayButton>
        <TrayButton aria-label="OneDrive"><svg width="17" height="12" viewBox="0 0 17 12"><path fill="#b9b2b1" d="M3 10C-.5 9 0 5 3 5c1-4.500 7-5.500 9-1z" /><path fill="#fff" d="M4 11.500C1.500 10 3 7 6 7c1.500-3 6-3 7 0 4 0 4.500 4 1.500 4.500z" /></svg></TrayButton>
        <TrayButton aria-label="Battery"><Icon w={16} h={10}><path d="M.5 1h13v8H.5zM13.500 3.500h2v3h-2" /><path fill="#fff" stroke="none" d="M2 2.500h6v5H2z" /></Icon></TrayButton>
        <TrayButton aria-label="Wi-Fi"><Icon w={14}><path d="M1 13C1 6 6 1 13 1M4.500 13c0-5 3.500-8.500 8.500-8.500M8 13c0-3 2-5 5-5" opacity=".75" /><circle cx="12" cy="12" r="1" fill="#fff" /></Icon></TrayButton>
        <TrayButton aria-label="Volume"><Icon w={16} h={13}><path d="M1 4.500h2.500L7 1v11L3.500 8.500H1zM9.500 4.500c1 1 1 3 0 4M11.500 3c2 2 2 5 0 7M13.500 1.500c3 3 3 7 0 10" /></Icon></TrayButton>
        <TrayButton $w={37}>ENG</TrayButton>
        <Clock>8:55 PM<br />13-Dec-24</Clock>
        <TrayButton $w={44} aria-label="Notifications"><Icon w={17}><path d="M.5 1h16v12h-5l-3 3-3-3h-5z" /></Icon></TrayButton>
        <DesktopEdge aria-label="Show desktop" />
      </Tray>
    </Taskbar>
  );
}

export default function App() {
  const [tab, setTab] = useState("Home");
  return (
    <Shell>
      <GlobalStyle />
      <Header />
      <TabRow>
        {tabs.map((t) => (
          <Tab key={t} $active={t === tab} onClick={() => setTab(t)}>{t}</Tab>
        ))}
        <Share><Icon w={12} h={13}><path d="M4 4.500H1V12h9V9M3.500 9c0-3 2-4.500 5-4.500V2l3 3.500-3 3.500V6.500" /></Icon>Share</Share>
      </TabRow>
      <Ribbon />
      <DocumentView />
      <Status />
      <SystemBar />
    </Shell>
  );
}
